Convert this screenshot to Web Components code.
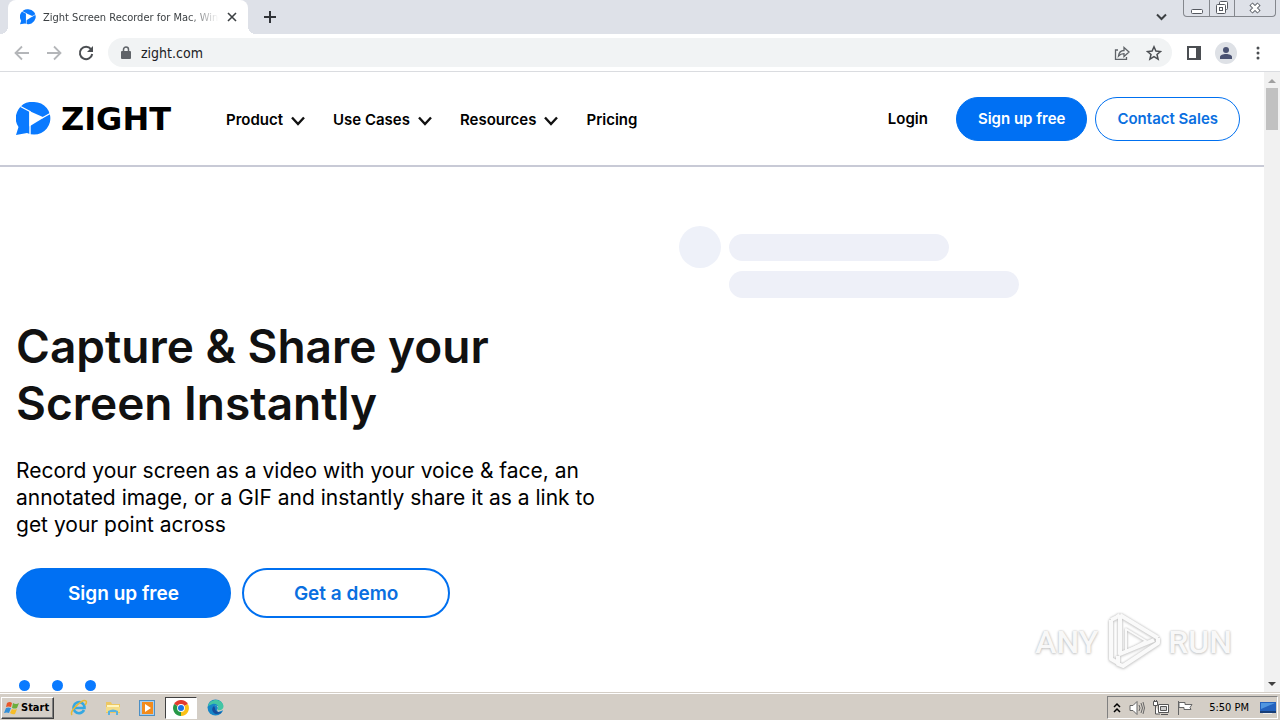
<!DOCTYPE html>
<html lang="en">
<head>
<meta charset="utf-8">
<title>Zight Screen Recorder for Mac, Windows</title>
<style>
html, body { height: 100%; margin: 0; }
body { overflow: hidden; font-family: Inter, sans-serif; color: #000; background: #fff; }
</style>
</head>
<body>
<desktop-screen></desktop-screen>
<script>
function define(name, css, html) {
  const template = document.createElement('template');
  template.innerHTML = `<style>*{box-sizing:border-box} ${css}</style>${html}`;
  customElements.define(name, class extends HTMLElement {
    constructor() {
      super();
      this.attachShadow({ mode: 'open' }).append(template.content.cloneNode(true));
    }
  });
}

define('zight-mark', `
  :host { display: block; flex: none; width: 35px; height: 34px; }
  svg { display: block; width: 100%; height: 100%; }`, `
  <svg viewBox="0 0 35 34" aria-hidden="true">
    <path fill="#0a7aff" d="M18 0a16.300 16.300 0 1 1-7 31L0 33l2.500-8A16.300 16.300 0 0 1 18 0z"/>
    <path fill="none" stroke="#fff" stroke-width="1.400" d="M4.500 4.500L14 9.500M14 33V9M26 16L35 11"/>
    <path fill="#fff" d="M13.300 9L28 15.500 13.300 24.500z"/>
  </svg>`);

define('browser-tab', `
  :host { display: flex; align-items: center; gap: 7px; width: 240px; height: 34px; padding: 0 10px 0 12px;
    background: #fff; border-radius: 8px 8px 0 0; position: relative; color: #3c4043;
    font: 11px "DejaVu Sans Condensed", "DejaVu Sans", sans-serif; }
  :host::before, :host::after { content: ""; position: absolute; bottom: 0; width: 8px; height: 8px; }
  :host::before { left: -8px; background: radial-gradient(circle at 0 0, transparent 8px, #fff 8px); }
  :host::after { right: -8px; background: radial-gradient(circle at 100% 0, transparent 8px, #fff 8px); }
  zight-mark { width: 16px; height: 16px; }
  .title { flex: 1; min-width: 0; overflow: hidden; white-space: nowrap;
    -webkit-mask-image: linear-gradient(90deg, #000 calc(100% - 32px), transparent);
    mask-image: linear-gradient(90deg, #000 calc(100% - 32px), transparent); }
  button { border: 0; padding: 0; background: none; width: 12px; height: 12px; }
  svg { display: block; }`, `
  <zight-mark></zight-mark>
  <span class="title"><slot></slot></span>
  <button aria-label="Close tab"><svg width="12" height="12" fill="none" stroke="#3c4043" stroke-width="1.600"><path d="M2 2l8 8M10 2l-8 8"/></svg></button>`);

define('tab-strip', `
  :host { display: flex; align-items: flex-start; height: 34px; padding: 0 4px 0 8px; background: #dee1e8; }
  button { border: 0; padding: 0; background: none; display: grid; place-items: center; }
  .new { width: 28px; height: 34px; margin-left: 8px; }
  .search { width: 28px; height: 34px; margin: 0 8px 0 auto; }
  .window { display: flex; height: 17px; border: 1px solid #84878d; border-top: 0; border-radius: 0 0 4px 4px; background: #dee1e8; }
  .window button { width: 25px; height: 16px; }
  .window button + button { border-left: 1px solid #84878d; }
  .window button:last-child { width: 41px; }`, `
  <browser-tab>Zight Screen Recorder for Mac, Windows</browser-tab>
  <button class="new" aria-label="New tab"><svg width="12" height="12" stroke="#303338" stroke-width="2"><path d="M6 0v12M0 6h12"/></svg></button>
  <button class="search" aria-label="Search tabs"><svg width="11" height="8" fill="none" stroke="#3c4043" stroke-width="2"><path d="M1 1.500l4.500 4.500L10 1.500"/></svg></button>
  <div class="window">
    <button aria-label="Minimize"><svg width="12" height="12" fill="#fff" stroke="#555960"><rect x=".5" y="7.500" width="11" height="4" rx="1"/></svg></button>
    <button aria-label="Restore"><svg width="14" height="14" fill="#fff" stroke="#555960"><rect x="4.500" y=".5" width="8" height="8" rx="1"/><rect x="1.500" y="3.500" width="9" height="9" rx="1"/><rect x="4.500" y="6.500" width="3" height="3"/></svg></button>
    <button aria-label="Close window"><svg width="14" height="12"><path d="M3 2l8 8M11 2l-8 8" stroke="#555960" stroke-width="4.500"/><path d="M3.500 2.500l7 7M10.500 2.500l-7 7" stroke="#fff" stroke-width="2.500"/></svg></button>
  </div>`);

define('tool-bar', `
  :host { display: flex; align-items: center; height: 38px; padding: 0 6px; background: #fff; border-bottom: 1px solid #dadce0; }
  button { border: 0; padding: 0; background: none; display: grid; place-items: center; width: 32px; height: 32px; flex: none; }
  .omni { display: flex; align-items: center; flex: 1; height: 29px; margin: 0 6px; padding: 0 2px 0 13px;
    border-radius: 15px; background: #f1f3f4; }
  label { display: flex; margin-right: 10px; }
  input { flex: 1; min-width: 0; border: 0; padding: 0; outline: 0; background: none; color: #202124;
    font: 14px "DejaVu Sans Condensed", "DejaVu Sans", sans-serif; }
  .avatar { width: 22px; height: 22px; border-radius: 50%; background: #dee1e6; display: grid; place-items: center; overflow: hidden; }`, `
  <button aria-label="Back" disabled><svg width="16" height="16" fill="none" stroke="#b4b6b9" stroke-width="1.800"><path d="M15 8H2M8 1.500L1.500 8 8 14.500"/></svg></button>
  <button aria-label="Forward" disabled><svg width="16" height="16" fill="none" stroke="#b4b6b9" stroke-width="1.800"><path d="M1 8h13M8 1.500L14.500 8 8 14.500"/></svg></button>
  <button aria-label="Reload"><svg width="16" height="16"><path d="M13 4.200A6.200 6.200 0 1 0 14.200 9" fill="none" stroke="#4b4e52" stroke-width="2"/><path d="M15 1v6H9z" fill="#4b4e52"/></svg></button>
  <div class="omni">
    <label for="url" aria-label="Address"><svg width="10" height="14"><rect y="5" width="10" height="8" rx="1" fill="#5f6368"/><path d="M2.500 6V3.500a2.500 2.500 0 0 1 5 0V6" fill="none" stroke="#5f6368" stroke-width="1.500"/></svg></label>
    <input id="url" type="text" value="zight.com">
    <button aria-label="Share"><svg width="16" height="16" fill="none" stroke="#5f6368" stroke-width="1.300"><path d="M4 5H1.500v9.300h11V12M4.500 11c.5-4 2.500-5.500 5.500-5.500V2.500L15 7l-5 4.500V8.600c-2.500 0-4 .6-5.500 2.400z"/></svg></button>
    <button aria-label="Bookmark"><svg width="16" height="16" fill="none" stroke="#4b4e52" stroke-width="1.500"><path d="M8 1.800l1.900 4.300 4.600.4-3.500 3 1.100 4.600L8 11.700l-4.100 2.400L5 9.500l-3.500-3 4.600-.4z"/></svg></button>
  </div>
  <button aria-label="Side panel"><svg width="14" height="14"><rect x="1" y="1" width="12" height="12" fill="#fff" stroke="#4b4e52" stroke-width="2"/><path d="M9 1h4v12H9z" fill="#4b4e52"/></svg></button>
  <button aria-label="Profile"><span class="avatar"><svg width="14" height="14" fill="#4a5272"><circle cx="7" cy="4" r="3"/><path d="M1 13v-2c0-4 12-4 12 0v2z"/></svg></span></button>
  <button aria-label="Menu"><svg width="4" height="14" fill="#4b4e52"><circle cx="2" cy="2" r="1.500"/><circle cx="2" cy="7" r="1.500"/><circle cx="2" cy="12" r="1.500"/></svg></button>`);

define('nav-item', `
  :host { display: block; }
  button { display: flex; align-items: center; gap: 8px; border: 0; padding: 0; background: none; color: inherit; font: inherit; }
  svg { display: block; margin-top: 2px; }`, `
  <button aria-haspopup="true"><slot></slot><svg width="14" height="10" fill="none" stroke="#111" stroke-width="2.400"><path d="M1 1.500L7 8l6-6.500"/></svg></button>`);

define('pill-link', `
  :host { display: block; }
  a { display: flex; align-items: center; justify-content: center; height: 44px; padding: 1px 21px 0; border: 1px solid #0070f0;
    border-radius: 25px; color: #0a6fe0; text-decoration: none; white-space: nowrap; font: 600 15px/20px Inter, sans-serif; }
  :host([filled]) a { background: #0070f3; color: #fff; }
  :host([large]) a { height: 50px; padding: 1px 50px 0; border-width: 2px; font-size: 19px; }`, `
  <a href="#"><slot></slot></a>`);

define('site-header', `
  :host { display: flex; align-items: center; height: 95px; padding: 0 24px 0 16px; border-bottom: 2px solid #c8cad6; font: 600 15px/20px Inter, sans-serif; }
  .logo { display: flex; align-items: center; gap: 10px; min-width: 160px; color: #000; text-decoration: none; font: 700 32px/34px "DejaVu Sans", sans-serif; }
  nav { display: flex; align-items: center; gap: 28px; margin-left: 50px; padding-top: 2px; }
  nav a, .login { color: inherit; text-decoration: none; }
  .actions { display: flex; align-items: center; gap: 8px; margin-left: auto; }
  .login { margin-right: 20px; }`, `
  <a class="logo" href="#"><zight-mark></zight-mark><span>ZIGHT</span></a>
  <nav><nav-item>Product</nav-item><nav-item>Use Cases</nav-item><nav-item>Resources</nav-item><a href="#">Pricing</a></nav>
  <div class="actions"><a class="login" href="#">Login</a><pill-link filled>Sign up free</pill-link><pill-link>Contact Sales</pill-link></div>`);

define('media-placeholder', `
  :host { display: grid; grid-template-columns: 42px 1fr; column-gap: 8px; align-content: start; padding-top: 59px; }
  .avatar { width: 42px; height: 42px; border-radius: 50%; background: #eef1f9; }
  .lines { display: grid; gap: 10px; padding-top: 8px; }
  .lines div { height: 27px; border-radius: 14px; background: #eef0f8; max-width: 290px; }
  .lines div:first-child { max-width: 220px; }`, `
  <div class="avatar"></div><div class="lines"><div></div><div></div></div>`);

define('hero-section', `
  :host { display: grid; grid-template-columns: 7fr 6fr; padding: 0 16px; }
  .copy { padding-top: 151px; }
  h1 { margin: 0; max-width: 520px; color: #111; font: 600 46px/57px Inter, sans-serif; }
  p { margin: 25px 0 30px; max-width: 600px; font: 400 21px/27px Inter, sans-serif; }
  .cta { display: flex; gap: 11px; }
  .dots { display: flex; gap: 22px; margin: 62px 0 0 3px; }
  .dots i { width: 11px; height: 11px; border-radius: 50%; background: #0a7aff; }`, `
  <div class="copy">
    <h1>Capture &amp; Share your Screen Instantly</h1>
    <p>Record your screen as a video with your voice &amp; face, an annotated image, or a GIF and instantly share it as a link to get your point across</p>
    <div class="cta"><pill-link large filled>Sign up free</pill-link><pill-link large>Get a demo</pill-link></div>
    <div class="dots"><i></i><i></i><i></i></div>
  </div>
  <media-placeholder></media-placeholder>`);

define('scroll-rail', `
  :host { display: flex; flex-direction: column; align-items: center; width: 16px; flex: none; background: #f1f1f1; }
  .cap { display: grid; place-items: center; width: 16px; height: 16px; }
  .cap.end { margin-top: auto; }
  .thumb { width: 12px; height: 42px; background: #c1c1c1; }`, `
  <div class="cap"><svg width="8" height="5"><path d="M0 5l4-4 4 4z" fill="#a0a0a0"/></svg></div>
  <div class="thumb"></div>
  <div class="cap end"><svg width="8" height="5"><path d="M0 0l4 4 4-4z" fill="#404040"/></svg></div>`);

define('any-run', `
  :host { position: absolute; right: 48px; bottom: 18px; display: flex; align-items: center; gap: 5px; pointer-events: none;
    color: #f8f8f8; font: 500 32px/64px Roboto, sans-serif; text-shadow: 0 0 2px #bbb, 0 1px 3px #ccc; }
  svg { display: block; filter: drop-shadow(0 0 1px #bbb) drop-shadow(0 1px 1px #ddd); }`, `
  <span>ANY</span>
  <svg width="60" height="64" fill="none" stroke="#fafafa" stroke-width="4" stroke-linejoin="round"><path d="M17 5v39l34-14M17 5l38 23M17 5l-3 2M55 28v5L20 56l-5-2V46M8 10v39l7 4M8 10l6-3"/><path d="M23 19l20 12-20 11z" stroke-width="2"/></svg>
  <span>RUN</span>`);

define('web-view', `
  :host { display: flex; flex: 1; min-height: 0; position: relative; overflow: hidden; background: #fff; }
  main { flex: 1; min-width: 0; overflow: hidden; }`, `
  <main><site-header></site-header><hero-section></hero-section></main>
  <scroll-rail></scroll-rail>
  <any-run></any-run>`);

define('task-bar', `
  :host { display: flex; align-items: center; height: 28px; padding: 3px 2px 1px 1px; border-top: 1px solid #d4cec6;
    background: #d4cec6; box-shadow: inset 0 1px #fff; color: #000; font: 11px "DejaVu Sans Condensed", "DejaVu Sans", sans-serif; }
  button { display: grid; place-items: center; border: 0; padding: 0; background: none; }
  .start { display: flex; align-items: center; gap: 1px; width: 53px; height: 22px; padding: 0 2px; color: #000;
    border: 1px solid; border-color: #fff #404040 #404040 #fff; box-shadow: inset -1px -1px #808080;
    font: 700 11px "DejaVu Sans Condensed", "DejaVu Sans", sans-serif; }
  .apps { display: flex; gap: 2px; margin-left: 9px; }
  .apps button { width: 32px; height: 22px; }
  .apps .active { background: #fff; border: 1px solid; border-color: #404040 #fff #fff #404040; }
  .tray { display: flex; align-items: center; gap: 8px; height: 23px; margin-left: auto; padding: 0 1px 0 5px;
    border: 1px solid; border-color: #808080 #fff #fff #808080; }
  .tray time { margin: 0 3px 0 8px; }
  svg { display: block; }`, `
  <button class="start"><svg width="16" height="16"><path d="M3 3q3-2 5 0L7 7Q4 6 2 7z" fill="#e8572a"/><path d="M9 3q3 2 6 0l-2 5q-2 1-5 0z" fill="#6cae3c"/><path d="M2 8q2-1 5 0l-2 5q-2-1-5 0z" fill="#338fd8"/><path d="M8 9q2 1 5 0l-2 5q-2 1-5-1z" fill="#f6bd28"/></svg>Start</button>
  <div class="apps">
    <button aria-label="Internet Explorer"><svg width="18" height="18" fill="none"><path d="M14 11a5.500 5.500 0 1 1 .5-2H5" stroke="#34a8e2" stroke-width="2.600"/><path d="M2 16C-1 12 13-1 16 2c1 1 0 3-1 4" stroke="#e9b931" stroke-width="1.500"/></svg></button>
    <button aria-label="File Explorer"><svg width="18" height="18"><path d="M2 3h5l1 2h8v9H2z" fill="#edc762"/><path d="M3 6h12v3H3z" fill="#fff5bf"/><path d="M2 8h14v5H2z" fill="#f4dc86"/><path d="M4 16v-4q5-3 10 0v4h-2v-3H6v3z" fill="#58b2df"/></svg></button>
    <button aria-label="Media Player"><svg width="16" height="16"><rect x=".5" y=".5" width="15" height="15" fill="#a9cdec" stroke="#4c8fc4"/><rect x="3" y="2" width="11" height="12" fill="#f28b1c"/><path d="M6 4l6 4-6 4z" fill="#fff"/></svg></button>
    <button class="active" aria-label="Chrome"><svg width="16" height="16" viewBox="-8 -8 16 16"><path d="M0 0L-6.900-4A8 8 0 0 1 6.900-4z" fill="#e33b2e"/><path d="M0 0L6.900-4A8 8 0 0 1 0 8z" fill="#fbc116"/><path d="M0 0L0 8A8 8 0 0 1-6.900-4z" fill="#279847"/><circle r="3.900" fill="#fff"/><circle r="3" fill="#1a73e8"/></svg></button>
    <button aria-label="Edge"><svg width="17" height="17"><circle cx="8.500" cy="8.500" r="8" fill="#1685c7"/><path d="M7 7c-3 2-2 7 2 8 3 0 5-1 6-2-4 1-7-1-7-4z" fill="#174c9a"/><path d="M8 7c2-1 4 2 2 4l1 2 6-2V7z" fill="#d4cec6"/><path d="M1 7C3-1 15-1 16.500 7c0 4-4 5-6 4 2-4-1-7-5-6z" fill="#43c6a4"/></svg></button>
  </div>
  <div class="tray">
    <svg width="8" height="12" fill="none" stroke="#000" stroke-width="1.500"><path d="M1 5l3-3 3 3M1 10l3-3 3 3"/></svg>
    <svg width="16" height="16" fill="#fff" stroke="#666"><path d="M1 5.500h3l4-4v13l-4-4H1z"/><path d="M10 5q2 3 0 6M12 3q3 5 0 10M14 2q3 6 0 12" fill="none"/></svg>
    <svg width="16" height="16" fill="#fff" stroke="#555"><path d="M5.500 4.500h10v8h-10zM8 14.500h7M2.500 6v8H7"/><path d="M7.500 6.500h6v4h-6z" fill="#ccc"/><path d="M.5 1.500h4v4h-4zM1.500 0v2M3.500 0v2"/></svg>
    <svg width="16" height="16" fill="#fff" stroke="#666"><path d="M1.500 1v14M2 2.500h6v2h7l-2 3 1 2H7v-2H2z"/></svg>
    <time>5:50 PM</time>
    <svg width="16" height="14"><path d="M0 1h16v9H0z" fill="#2462bd"/><path d="M1 2h14L1 8z" fill="#5096e0"/><path d="M0 10h16v2H0z" fill="#183e78"/><path d="M3 12h9v1H3z" fill="#eee"/></svg>
  </div>`);

define('desktop-screen', `
  :host { display: flex; flex-direction: column; height: 100vh; }
  tab-strip, tool-bar, task-bar { flex: none; }`, `
  <tab-strip></tab-strip><tool-bar></tool-bar><web-view></web-view><task-bar></task-bar>`);
</script>
</body>
</html>
